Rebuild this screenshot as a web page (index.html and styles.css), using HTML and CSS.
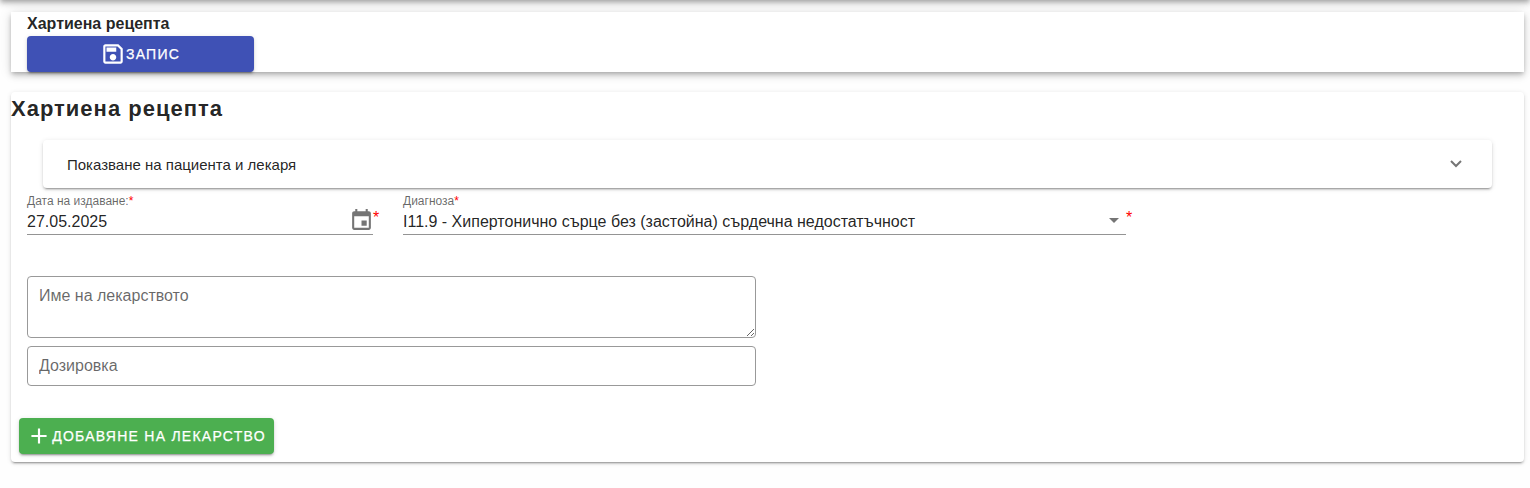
FILE: index.html
```html
<!DOCTYPE html>
<html lang="bg">
<head>
<meta charset="utf-8">
<title>Хартиена рецепта</title>
<link rel="stylesheet" href="styles.css">
</head>
<body>
<div class="app-bar"></div>
<main class="page">
  <header class="toolbar">
    <div class="toolbar-title">Хартиена рецепта</div>
    <button class="btn btn-save" type="button">
      <svg class="icon" viewBox="0 0 24 24"><path d="M17 3H5c-1.110 0-2 .9-2 2v14c0 1.100.89 2 2 2h14c1.100 0 2-.9 2-2V7l-4-4zm2 16H5V5h11.170L19 7.830V19zm-7-7c-1.660 0-3 1.340-3 3s1.340 3 3 3 3-1.340 3-3-1.340-3-3-3zM6 6h9v4H6z"/></svg>
      <span>ЗАПИС</span>
    </button>
  </header>
  <section class="card">
    <h1 class="card-title">Хартиена рецепта</h1>
    <div class="panel">
      <span class="panel-title">Показване на пациента и лекаря</span>
      <svg class="chevron" viewBox="0 0 12 8"><path d="M1 1l5 5 5-5"/></svg>
    </div>
    <div class="fields">
      <div class="field field-date">
        <div class="field-label">Дата на издаване:<span class="required">*</span></div>
        <div class="field-value">
          <span>27.05.2025</span>
          <svg class="calendar" viewBox="0 0 24 24"><path d="M17 12h-5v5h5v-5zM16 1v2H8V1H6v2H5c-1.110 0-1.990.9-1.990 2L3 19c0 1.100.89 2 2 2h14c1.100 0 2-.9 2-2V5c0-1.100-.9-2-2-2h-1V1h-2zm3 18H5V8h14v11z"/></svg>
        </div>
      </div>
      <span class="required marker">*</span>
      <div class="field field-diagnosis">
        <div class="field-label">Диагноза<span class="required">*</span></div>
        <div class="field-value">
          <span>I11.9 - Хипертонично сърце без (застойна) сърдечна недостатъчност</span>
          <span class="arrow"></span>
        </div>
      </div>
      <span class="required marker">*</span>
    </div>
    <div class="medicine">
      <textarea class="box box-name" placeholder="Име на лекарството"></textarea>
      <input class="box box-dose" type="text" placeholder="Дозировка">
    </div>
    <button class="btn btn-add" type="button">
      <svg class="icon" viewBox="0 0 24 24"><path d="M19 13h-6v6h-2v-6H5v-2h6V5h2v6h6v2z"/></svg>
      <span>ДОБАВЯНЕ НА ЛЕКАРСТВО</span>
    </button>
  </section>
</main>
</body>
</html>
```
FILE: styles.css
```css
* { box-sizing: border-box; }

body {
  margin: 0;
  height: 488px;
  overflow: hidden;
  background: #fefefe;
  color: rgba(0, 0, 0, 0.87);
  font-family: "Liberation Sans", Arial, sans-serif;
  font-size: 16px;
}

.app-bar {
  height: 64px;
  margin-top: -64px;
  box-shadow: 0 2px 4px -1px rgba(0, 0, 0, 0.2), 0 4px 5px 0 rgba(0, 0, 0, 0.14), 0 1px 10px 0 rgba(0, 0, 0, 0.12);
}

.page {
  display: flex;
  flex-direction: column;
  gap: 20px;
  padding: 12px 6px 0 11px;
}

.toolbar {
  height: 60px;
  padding: 0 16px;
  background: #fff;
  box-shadow: 0 2px 4px -1px rgba(0, 0, 0, 0.2), 0 4px 6px 0 rgba(0, 0, 0, 0.14), 0 1px 12px 0 rgba(0, 0, 0, 0.12);
}

.toolbar-title {
  height: 24px;
  line-height: 24px;
  font-weight: 700;
}

.btn {
  display: flex;
  align-items: center;
  justify-content: center;
  height: 36px;
  padding: 0 8px;
  border: 0;
  border-radius: 4px;
  color: #fff;
  font-family: inherit;
  font-size: 14px;
  font-weight: 500;
  letter-spacing: 1.25px;
  white-space: nowrap;
  -webkit-text-stroke: 0.25px currentColor;
  box-shadow: 0 3px 1px -2px rgba(0, 0, 0, 0.2), 0 2px 2px 0 rgba(0, 0, 0, 0.14), 0 1px 5px 0 rgba(0, 0, 0, 0.12);
}

.btn-save { width: 227px; background: #3f51b5; }

.icon {
  width: 26px;
  height: 26px;
  margin: 0 0 0 -1px;
  flex: none;
  fill: currentColor;
}

.card {
  height: 370px;
  border-radius: 4px;
  background: #fff;
  box-shadow: 0 3px 1px -2px rgba(0, 0, 0, 0.2), 0 2px 2px 0 rgba(0, 0, 0, 0.14), 0 1px 5px 0 rgba(0, 0, 0, 0.12);
}

.card-title {
  margin: 0;
  height: 48px;
  line-height: 34px;
  font-size: 22px;
  letter-spacing: 1px;
}

.panel {
  display: flex;
  align-items: center;
  justify-content: space-between;
  height: 48px;
  margin: 0 32px;
  padding: 0 30px 0 24px;
  border-radius: 4px;
  background: #fff;
  font-size: 15px;
  box-shadow: 0 3px 1px -2px rgba(0, 0, 0, 0.2), 0 2px 2px 0 rgba(0, 0, 0, 0.14), 0 1px 5px 0 rgba(0, 0, 0, 0.12);
}

.panel-title { padding-top: 2px; line-height: 16px; }

.chevron {
  width: 12px;
  height: 8px;
  fill: none;
  stroke: rgba(0, 0, 0, 0.54);
  stroke-width: 2;
}

.fields {
  display: flex;
  height: 47px;
  padding-left: 16px;
}

.field { border-bottom: 1px solid rgba(0, 0, 0, 0.42); }
.field-date { width: 346px; }
.field-diagnosis { width: 723px; margin-left: 22px; }

.field-label {
  height: 20px;
  padding-top: 6px;
  line-height: 14px;
  font-size: 12px;
  color: rgba(0, 0, 0, 0.6);
}

.field-value {
  display: flex;
  align-items: center;
  justify-content: space-between;
  height: 26px;
  line-height: 18px;
  padding-top: 1px;
}

.required { color: #f00; }

.marker {
  width: 8px;
  padding-top: 21px;
}

.calendar {
  width: 25px;
  height: 25px;
  margin: 0 -1px 2px 0;
  fill: rgba(0, 0, 0, 0.54);
}

.arrow {
  margin: 0 7px 2px 0;
  border: 5px solid transparent;
  border-top-color: rgba(0, 0, 0, 0.54);
  border-bottom: 0;
}

.medicine {
  display: flex;
  flex-direction: column;
  gap: 8px;
  width: 729px;
  margin: 41px 0 32px 16px;
}

.box {
  display: block;
  width: 100%;
  border: 1px solid #999;
  border-radius: 4px;
  outline: 0;
  background: #fff;
  font: 16px/20px "Liberation Sans", Arial, sans-serif;
}

.box::placeholder { color: rgba(0, 0, 0, 0.6); opacity: 1; }
.box-name { height: 62px; padding: 9px 11px; overflow: hidden; resize: both; }
.box-dose { height: 40px; padding: 0 11px; }

.btn-add { width: 255px; margin-left: 8px; background: #4caf50; }
```
